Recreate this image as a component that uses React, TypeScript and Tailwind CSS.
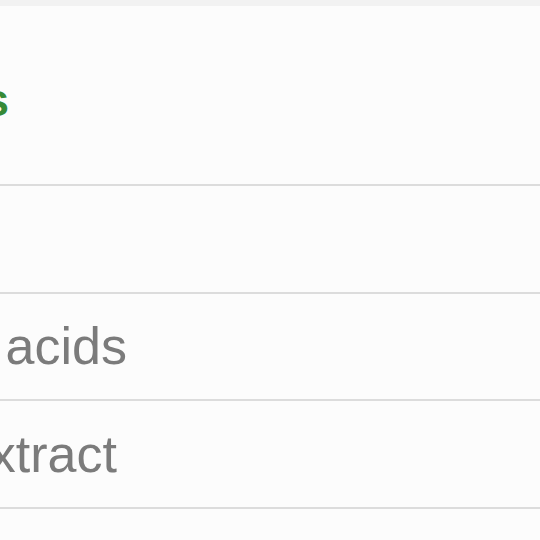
const rows = [
  { label: "Protein", end: "w-[0px]" },
  { label: "Amino acids", end: "w-[127px]" },
  { label: "Green tea extract", end: "w-[117px]" },
];

export default function App() {
  return (
    <div className="h-[540px] w-[540px] overflow-hidden bg-[#fcfcfc] font-['Liberation_Sans',Arial,sans-serif]">
      <div className="h-[6px] bg-[#f2f2f2]" />
      <div className="h-[178px] pt-[71px]">
        <div className="flex w-[9px] justify-end whitespace-nowrap text-[46px] font-semibold leading-none text-[#368a37]">
          Ingredients
        </div>
      </div>
      {rows.map((row) => (
        <div
          key={row.label}
          className="flex h-[107.5px] items-center border-t-2 border-[#dcdcdc]"
        >
          <div
            className={`flex ${row.end} justify-end whitespace-nowrap text-[52px] leading-none text-[#7b7b7b]`}
          >
            {row.label}
          </div>
        </div>
      ))}
      <div className="border-t-2 border-[#dcdcdc]" />
    </div>
  );
}
